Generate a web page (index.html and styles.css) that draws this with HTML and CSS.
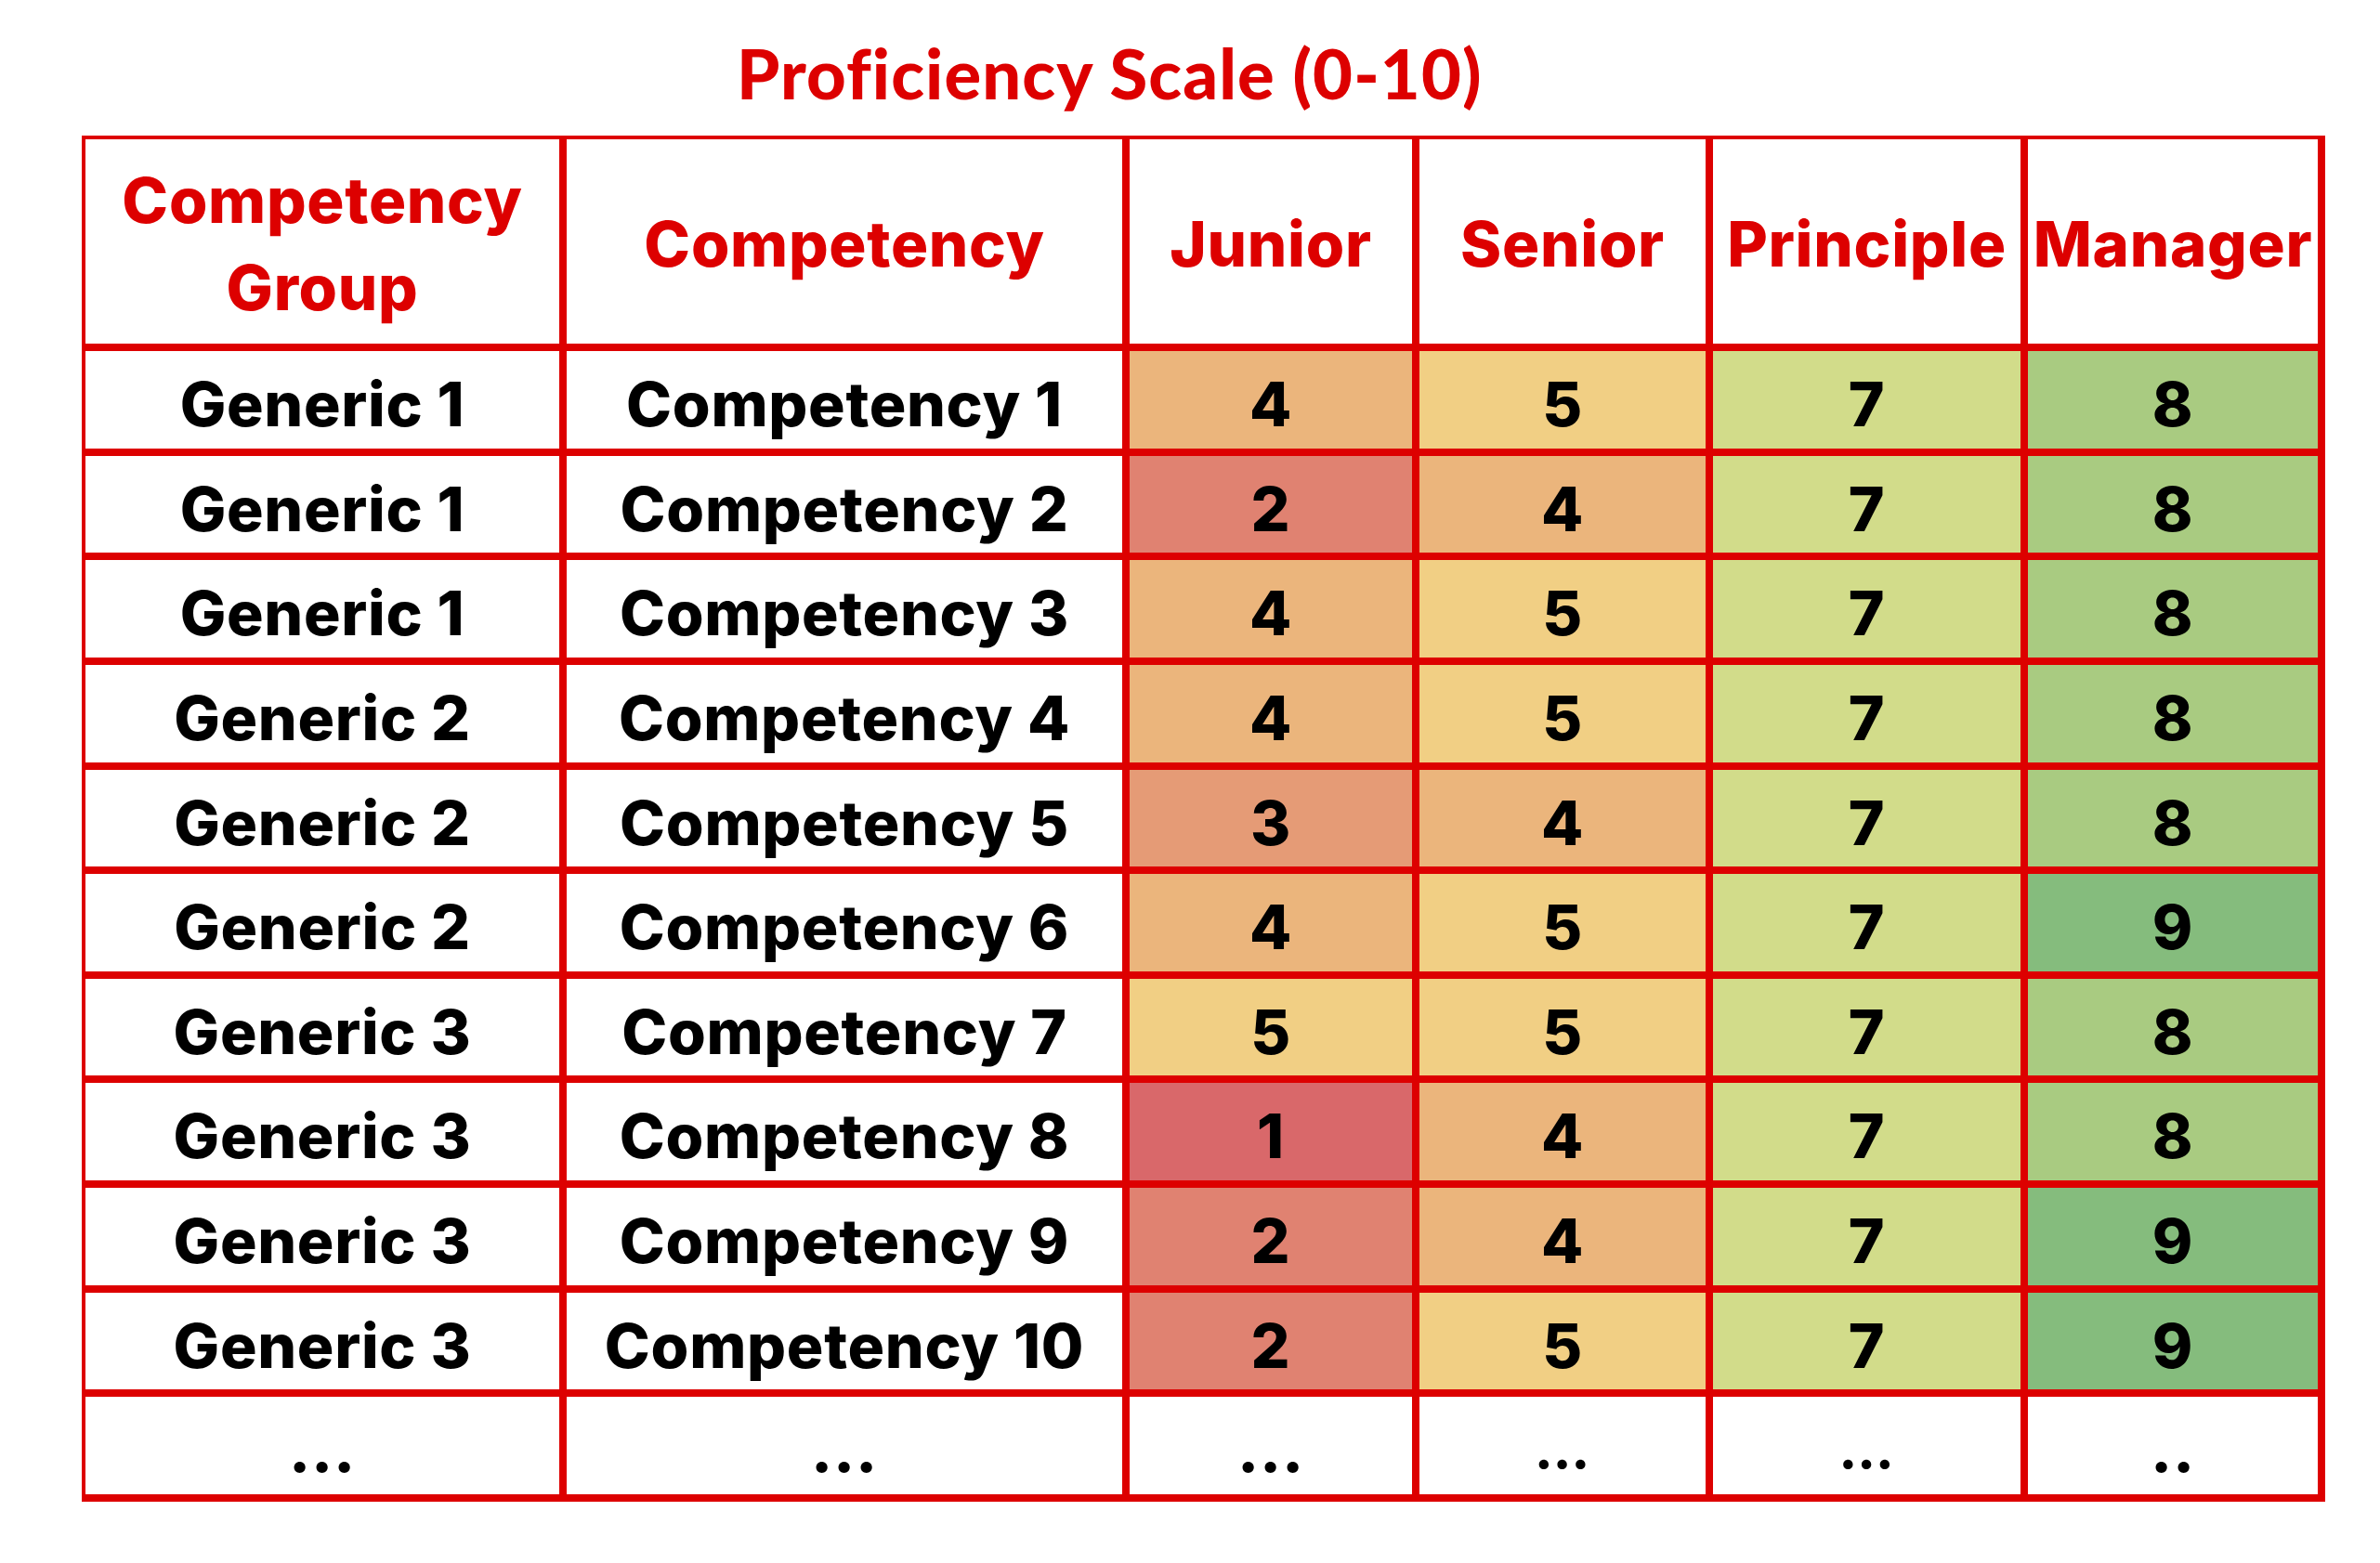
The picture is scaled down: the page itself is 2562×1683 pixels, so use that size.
FILE: index.html
```html
<!DOCTYPE html>
<html lang="en">
<head>
<meta charset="utf-8">
<title>Proficiency Scale</title>
<link rel="stylesheet" href="styles.css">
</head>
<body>
<main class="page">
  <h1 class="title">Proficiency Scale (0-10)</h1>
  <div class="grid">
    <div class="cell head">Competency<br>Group</div>
    <div class="cell head">Competency</div>
    <div class="cell head">Junior</div>
    <div class="cell head">Senior</div>
    <div class="cell head">Principle</div>
    <div class="cell head">Manager</div>

    <div class="cell">Generic 1</div><div class="cell">Competency 1</div>
    <div class="cell s4">4</div><div class="cell s5">5</div><div class="cell s7">7</div><div class="cell s8">8</div>

    <div class="cell">Generic 1</div><div class="cell">Competency 2</div>
    <div class="cell s2">2</div><div class="cell s4">4</div><div class="cell s7">7</div><div class="cell s8">8</div>

    <div class="cell">Generic 1</div><div class="cell">Competency 3</div>
    <div class="cell s4">4</div><div class="cell s5">5</div><div class="cell s7">7</div><div class="cell s8">8</div>

    <div class="cell">Generic 2</div><div class="cell">Competency 4</div>
    <div class="cell s4">4</div><div class="cell s5">5</div><div class="cell s7">7</div><div class="cell s8">8</div>

    <div class="cell">Generic 2</div><div class="cell">Competency 5</div>
    <div class="cell s3">3</div><div class="cell s4">4</div><div class="cell s7">7</div><div class="cell s8">8</div>

    <div class="cell">Generic 2</div><div class="cell">Competency 6</div>
    <div class="cell s4">4</div><div class="cell s5">5</div><div class="cell s7">7</div><div class="cell s9">9</div>

    <div class="cell">Generic 3</div><div class="cell">Competency 7</div>
    <div class="cell s5">5</div><div class="cell s5">5</div><div class="cell s7">7</div><div class="cell s8">8</div>

    <div class="cell">Generic 3</div><div class="cell">Competency 8</div>
    <div class="cell s1">1</div><div class="cell s4">4</div><div class="cell s7">7</div><div class="cell s8">8</div>

    <div class="cell">Generic 3</div><div class="cell">Competency 9</div>
    <div class="cell s2">2</div><div class="cell s4">4</div><div class="cell s7">7</div><div class="cell s9">9</div>

    <div class="cell">Generic 3</div><div class="cell">Competency 10</div>
    <div class="cell s2">2</div><div class="cell s5">5</div><div class="cell s7">7</div><div class="cell s9">9</div>

    <div class="cell">...</div><div class="cell">...</div>
    <div class="cell">...</div><div class="cell small">…</div><div class="cell small">…</div><div class="cell">..</div>
  </div>
</main>
</body>
</html>
```

FILE: styles.css
```css
html, body {
  margin: 0;
  padding: 0;
  background: #ffffff;
}

.page {
  width: 2562px;
  height: 1683px;
  padding: 0;
  box-sizing: border-box;
}

.title {
  margin: 0;
  padding: 34px 0 0 793px;
  height: 112px;
  box-sizing: border-box;
  font-family: "Lato", "Liberation Sans", sans-serif;
  font-weight: 900;
  font-size: 74px;
  line-height: 90px;
  letter-spacing: 1.1px;
  color: #dd0000;
  white-space: nowrap;
}

.grid {
  margin-left: 88px;
  margin-top: 34px;
  width: max-content;
  display: grid;
  grid-template-columns: 510px 598px 304px 308px 331px 312px;
  grid-template-rows: 220px 105px 104px 105px 105px 104px 105px 104px 105px 105px 104px 105px;
  gap: 8px;
  padding: 4px 8px 8px 4px;
  background: #dd0000;
}

.cell {
  background: #ffffff;
  display: flex;
  align-items: center;
  justify-content: center;
  text-align: center;
  padding-top: 9px;
  box-sizing: border-box;
  font-family: "Inter", "DejaVu Sans", sans-serif;
  font-weight: 800;
  font-size: 66px;
  line-height: 1;
  letter-spacing: 0.7px;
  color: #000000;
  white-space: nowrap;
}

.head {
  color: #dd0000;
  font-size: 67px;
  line-height: 94px;
  padding-top: 6px;
}

.small {
  font-size: 56px;
}

.s1 { background: #d9686a; }
.s2 { background: #e08271; }
.s3 { background: #e59b76; }
.s4 { background: #ebb57c; }
.s5 { background: #f1cf84; }
.s7 { background: #d2dc8a; }
.s8 { background: #a9cb81; }
.s9 { background: #85bc7d; }
```
